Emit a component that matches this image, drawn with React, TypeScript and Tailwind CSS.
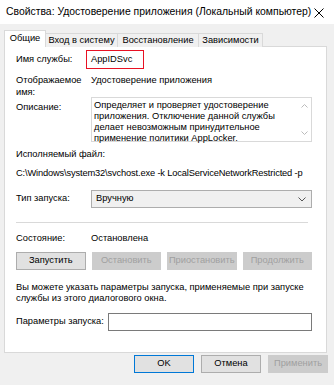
import React from "react";

const font = { fontFamily: '"Liberation Sans", Arial, sans-serif' };

function Btn({ children, disabled, primary, className = "" }: { children: React.ReactNode; disabled?: boolean; primary?: boolean; className?: string }) {
  return (
    <div
      className={
        "h-[18px] flex items-center justify-center text-[9.3px] whitespace-nowrap border " +
        (disabled
          ? "bg-[#cccccc] border-[#cccccc] text-[#a0a0a0] "
          : primary
          ? "bg-[#e1e1e1] border-[#0078d7] text-black "
          : "bg-[#e1e1e1] border-[#adadad] text-black ") +
        className
      }
    >
      {children}
    </div>
  );
}

export default function App() {
  return (
    <div className="w-[334px] h-[385px] bg-[#f0f0f0] text-black overflow-hidden" style={font}>
      {/* Title bar */}
      <div className="h-[24px] bg-white flex items-center justify-between pl-[6px] pr-[10px]">
        <span className="text-[10.4px] leading-none whitespace-nowrap">Свойства: Удостоверение приложения (Локальный компьютер)</span>
        <svg width="10" height="10" viewBox="0 0 10 10" className="mt-[1px]">
          <path d="M0.5 0.5 L9.5 9.5 M9.5 0.5 L0.5 9.5" stroke="#000" strokeWidth="1" />
        </svg>
      </div>

      {/* Tabs */}
      <div className="pt-[6px] pl-[4px] flex items-end h-[23px] relative z-10 text-[9.3px] whitespace-nowrap">
        <div className="h-[17px] w-[42px] bg-white border border-b-0 border-[#d9d9d9] flex items-center justify-center">Общие</div>
        <div className="h-[14px] w-[72px] bg-[#f0f0f0] border border-l-0 border-[#d9d9d9] border-b-0 flex items-center justify-center">Вход в систему</div>
        <div className="h-[14px] w-[81px] bg-[#f0f0f0] border border-l-0 border-[#d9d9d9] border-b-0 flex items-center justify-center">Восстановление</div>
        <div className="h-[14px] w-[64px] bg-[#f0f0f0] border border-l-0 border-[#d9d9d9] border-b-0 flex items-center justify-center">Зависимости</div>
      </div>

      {/* Panel */}
      <div className="ml-[4px] w-[323px] h-[307px] -mt-[1px] bg-white border border-[#d9d9d9] pl-[11px] text-[9.3px]">
        {/* Name */}
        <div className="mt-[3px] h-[19px] flex items-center">
          <div className="w-[75px]">Имя службы:</div>
          <div className="-ml-[5px] h-[19px] w-[58px] border border-[#e81123] flex items-center pl-[4px]">AppIDSvc</div>
        </div>
        {/* Display name */}
        <div className="mt-[5px] h-[23px] flex leading-[12px]">
          <div className="w-[75px]">Отображаемое<br />имя:</div>
          <div className="whitespace-nowrap">Удостоверение приложения</div>
        </div>
        {/* Description */}
        <div className="flex">
          <div className="w-[75px] pt-[4px] leading-[12px]">Описание:</div>
          <div className="w-[221px] h-[45px] border border-[#d9d9d9] flex">
            <div className="flex-1 pl-[2px] pr-[4px] pt-[2px] leading-[11px]">
              Определяет и проверяет удостоверение<br />приложения. Отключение данной службы<br />делает невозможным принудительное<br />применение политики AppLocker.
            </div>
            <div className="w-[14px] flex flex-col items-center justify-between py-[6px]">
              <svg width="7" height="4" viewBox="0 0 7 4"><path d="M0.5 3.5 L3.5 0.5 L6.5 3.5" stroke="#bbb" fill="none" /></svg>
              <svg width="7" height="4" viewBox="0 0 7 4"><path d="M0.5 0.5 L3.5 3.5 L6.5 0.5" stroke="#bbb" fill="none" /></svg>
            </div>
          </div>
        </div>
        {/* Executable */}
        <div className="mt-[6px] leading-[12px]">Исполняемый файл:</div>
        <div className="mt-[7px] leading-[12px] whitespace-nowrap tracking-[-0.15px]">C:\Windows\system32\svchost.exe -k LocalServiceNetworkRestricted -p</div>
        {/* Startup type */}
        <div className="mt-[11px] flex items-center">
          <div className="w-[75px]">Тип запуска:</div>
          <div className="w-[221px] h-[18px] border border-[#adadad] bg-[#f0f0f0] flex items-center justify-between pl-[4px] pr-[5px]">
            <span>Вручную</span>
            <svg width="8" height="5" viewBox="0 0 8 5"><path d="M0.5 0.5 L4 4 L7.5 0.5" stroke="#555" fill="none" /></svg>
          </div>
        </div>
        {/* Separator */}
        <div className="mt-[14px] w-[292px] h-[1px] bg-[#d9d9d9]" />
        {/* State */}
        <div className="mt-[9px] flex leading-[12px]">
          <div className="w-[75px]">Состояние:</div>
          <div>Остановлена</div>
        </div>
        {/* Buttons */}
        <div className="mt-[8px] w-[296px] grid grid-cols-4 gap-[6px]">
          <Btn>Запустить</Btn>
          <Btn disabled>Остановить</Btn>
          <Btn disabled>Приостановить</Btn>
          <Btn disabled>Продолжить</Btn>
        </div>
        {/* Info */}
        <div className="mt-[12px] leading-[11px] w-[300px]">
          Вы можете указать параметры запуска, применяемые при запуске<br />службы из этого диалогового окна.
        </div>
        {/* Params */}
        <div className="mt-[9px] flex items-center">
          <div className="w-[92px] whitespace-nowrap">Параметры запуска:</div>
          <div className="w-[204px] h-[18px] border border-[#7a7a7a] bg-white" />
        </div>
      </div>

      {/* Bottom buttons */}
      <div className="mt-[2px] flex justify-end gap-[7px] pr-[6px]">
        <Btn primary className="w-[60px]">OK</Btn>
        <Btn className="w-[60px]">Отмена</Btn>
        <Btn disabled className="w-[60px]">Применить</Btn>
      </div>
    </div>
  );
}
